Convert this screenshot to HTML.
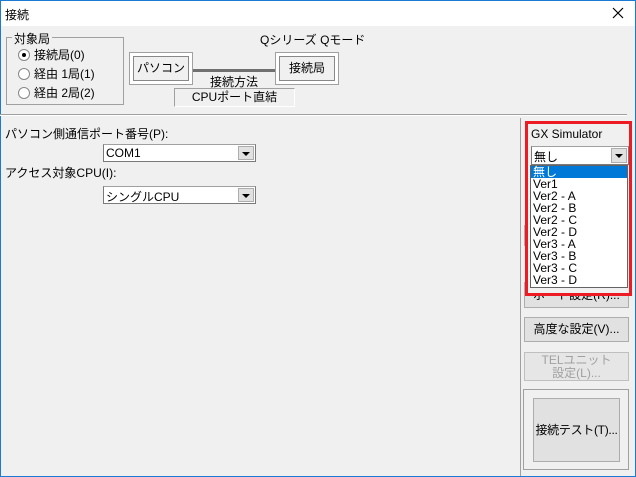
<!DOCTYPE html>
<html><head><meta charset="utf-8"><style>
*{margin:0;padding:0;box-sizing:border-box}
html,body{width:636px;height:477px;overflow:hidden}
body{background:#f0f0f0;font-family:"Liberation Sans","Noto Sans CJK JP",sans-serif;font-size:12px;color:#000;position:relative}
.a{position:absolute;white-space:nowrap}
.btn{position:absolute;background:#e1e1e1;border:1px solid #adadad;text-align:center;white-space:nowrap;overflow:hidden}
.cb{position:absolute;background:#fff;border:1px solid #7a7a7a;border-top-color:#a0a0a0}
.arr{position:absolute;right:1px;top:1px;bottom:1px;width:16px;background:#e1e1e1;border:1px solid #adadad}
.arr:after{content:"";position:absolute;left:3px;top:5px;border-left:4px solid transparent;border-right:4px solid transparent;border-top:4px solid #000}
.rad{position:absolute;width:12px;height:12px;border-radius:50%;background:#fff;border:1px solid #888}
.li{padding-left:2px;height:12px;line-height:12px}
</style></head><body>
<div class="a" style="left:0;top:0;width:636px;height:26px;background:#fff"></div>
<div class="a" style="left:5px;top:6px;font-size:12px">接続</div>
<svg class="a" style="left:612px;top:7px" width="12" height="12"><path d="M1 1L11 11M11 1L1 11" stroke="#000" stroke-width="1.2"/></svg>
<div class="a" style="left:0;top:0;width:636px;height:477px;border:1px solid #1a7ad4"></div>

<div class="a" style="left:6px;top:37px;width:118px;height:68px;border:1px solid #a0a0a0"></div>
<div class="a" style="left:12px;top:30px;background:#f0f0f0;padding:0 2px">対象局</div>
<div class="rad" style="left:18px;top:49px"><div style="position:absolute;left:3px;top:3px;width:4px;height:4px;border-radius:50%;background:#000"></div></div>
<div class="a" style="left:34px;top:46px">接続局(0)</div>
<div class="rad" style="left:18px;top:68px"></div>
<div class="a" style="left:34px;top:65px">経由 1局(1)</div>
<div class="rad" style="left:18px;top:87px"></div>
<div class="a" style="left:34px;top:84px">経由 2局(2)</div>

<div class="a" style="left:260px;top:31px">Qシリーズ Qモード</div>
<div class="a" style="left:129px;top:52px;width:64px;height:33px;background:#fff;border:1px solid #a0a0a0"><div style="position:absolute;left:3px;top:3px;right:3px;bottom:3px;background:#f0f0f0;border:1px solid #888;text-align:center;line-height:22px">パソコン</div></div>
<div class="a" style="left:193px;top:69px;width:82px;height:3px;background:#707070"></div>
<div class="a" style="left:275px;top:52px;width:64px;height:33px;background:#fff;border:1px solid #a0a0a0"><div style="position:absolute;left:3px;top:3px;right:3px;bottom:3px;background:#f0f0f0;border:1px solid #888;text-align:center;line-height:22px">接続局</div></div>
<div class="a" style="left:210px;top:73px">接続方法</div>
<div class="a" style="left:174px;top:88px;width:121px;height:19px;border:1px solid #a0a0a0;border-right-color:#fff;border-bottom-color:#fff;text-align:center;line-height:16px">CPUポート直結</div>

<div class="a" style="left:0;top:114px;width:627px;height:1px;background:#a0a0a0"></div>
<div class="a" style="left:0;top:115px;width:627px;height:1px;background:#fff"></div>
<div class="a" style="left:520px;top:118px;width:1px;height:358px;background:#a0a0a0"></div>

<div class="a" style="left:5px;top:125px">パソコン側通信ポート番号(P):</div>
<div class="cb" style="left:103px;top:144px;width:153px;height:18px"><span class="a" style="left:2px;top:1px">COM1</span><div class="arr"></div></div>
<div class="a" style="left:5px;top:164px">アクセス対象CPU(I):</div>
<div class="cb" style="left:103px;top:186px;width:153px;height:18px"><span class="a" style="left:2px;top:1px">シングルCPU</span><div class="arr"></div></div>

<div class="btn" style="left:524px;top:225px;width:30px;height:21px"></div>
<div class="btn" style="left:524px;top:282px;width:105px;height:26px;line-height:24px">ポート設定(R)...</div>
<div class="btn" style="left:524px;top:317px;width:105px;height:25px;line-height:23px">高度な設定(V)...</div>
<div class="btn" style="left:524px;top:352px;width:105px;height:29px;color:#a0a0a0;line-height:13px;padding-top:1px;border-color:#bfbfbf;background:#e6e6e6">TELユニット<br>設定(L)...</div>
<div class="a" style="left:523px;top:389px;width:106px;height:81px;border:1px solid #a0a0a0"></div>
<div class="btn" style="left:533px;top:398px;width:87px;height:64px;line-height:62px;font-size:12px;letter-spacing:-0.3px">接続テスト(T)...</div>

<div class="a" style="left:525px;top:121px;width:107px;height:175px;border:3px solid #ed1c24;background:#f0f0f0"></div>
<div class="a" style="left:531px;top:127px">GX Simulator</div>
<div class="cb" style="left:531px;top:146px;width:98px;height:19px"><span class="a" style="left:2px;top:1px">無し</span><div class="arr"></div></div>
<div class="a" style="left:530px;top:165px;width:98px;height:123px;background:#fff;border:1px solid #646464">
<div class="li" style="background:#0078d7;color:#fff">無し</div>
<div class="li">Ver1</div>
<div class="li">Ver2 - A</div>
<div class="li">Ver2 - B</div>
<div class="li">Ver2 - C</div>
<div class="li">Ver2 - D</div>
<div class="li">Ver3 - A</div>
<div class="li">Ver3 - B</div>
<div class="li">Ver3 - C</div>
<div class="li">Ver3 - D</div>
</div>
</body></html>
